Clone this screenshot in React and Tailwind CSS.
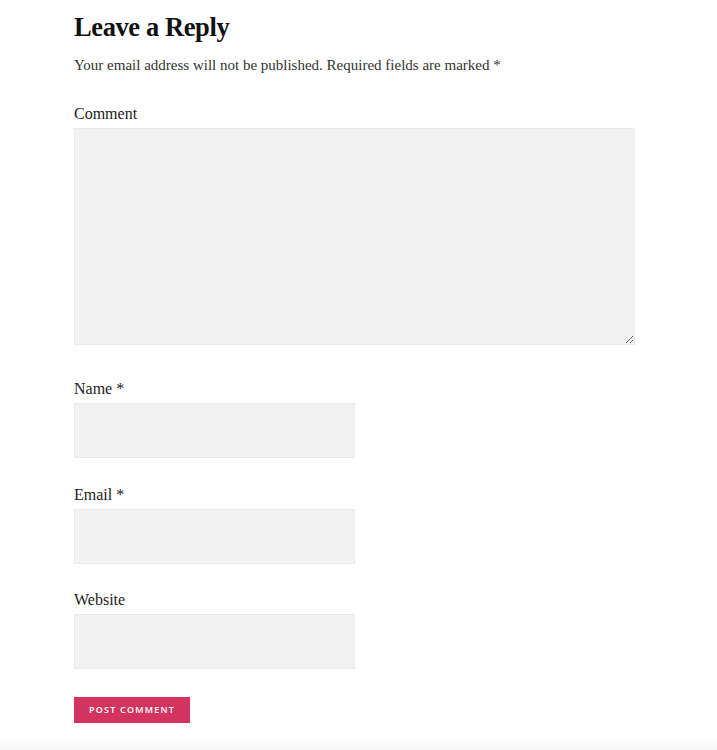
export default function App() {
  const serif = { fontFamily: '"Liberation Serif", "Times New Roman", serif' };
  return (
    <div className="min-h-[750px] w-full bg-white relative" style={serif}>
      <div className="pl-[74px] pr-[82px] pt-[9px] pb-[27px]">
        <h2 className="text-[26.5px] leading-[36px] font-bold text-[#111] tracking-[-0.4px]">Leave a Reply</h2>
        <p className="mt-[9px] text-[15px] leading-[22px] text-[#333]">
          Your email address will not be published. Required fields are marked *
        </p>
        <form className="mt-[27px] flex flex-col" onSubmit={(e) => e.preventDefault()}>
          <label className="text-[16px] leading-[22px] text-[#222]">Comment</label>
          <textarea className="mt-[3px] w-[561px] h-[217px] bg-[#f2f2f2] border border-[#ebebeb] outline-none block" />
          <label className="mt-[33px] text-[16px] leading-[22px] text-[#222]">Name *</label>
          <input className="mt-[3px] w-[281px] h-[55px] bg-[#f2f2f2] border border-[#ebebeb] outline-none block" />
          <label className="mt-[26px] text-[16px] leading-[22px] text-[#222]">Email *</label>
          <input className="mt-[3px] w-[281px] h-[55px] bg-[#f2f2f2] border border-[#ebebeb] outline-none block" />
          <label className="mt-[25px] text-[16px] leading-[22px] text-[#222]">Website</label>
          <input className="mt-[3px] w-[281px] h-[55px] bg-[#f2f2f2] border border-[#ebebeb] outline-none block" />
          <button
            type="submit"
            className="mt-[28px] w-[116px] h-[26px] bg-[#d3345f] text-white text-[9px] font-semibold tracking-[1.2px] uppercase flex items-center justify-center"
            style={{ fontFamily: '"Open Sans", "Liberation Sans", sans-serif' }}
          >
            Post Comment
          </button>
        </form>
      </div>
      <div className="absolute left-0 right-0 bottom-0 h-[14px] bg-gradient-to-b from-white to-[#f7f7f7]" />
    </div>
  );
}
